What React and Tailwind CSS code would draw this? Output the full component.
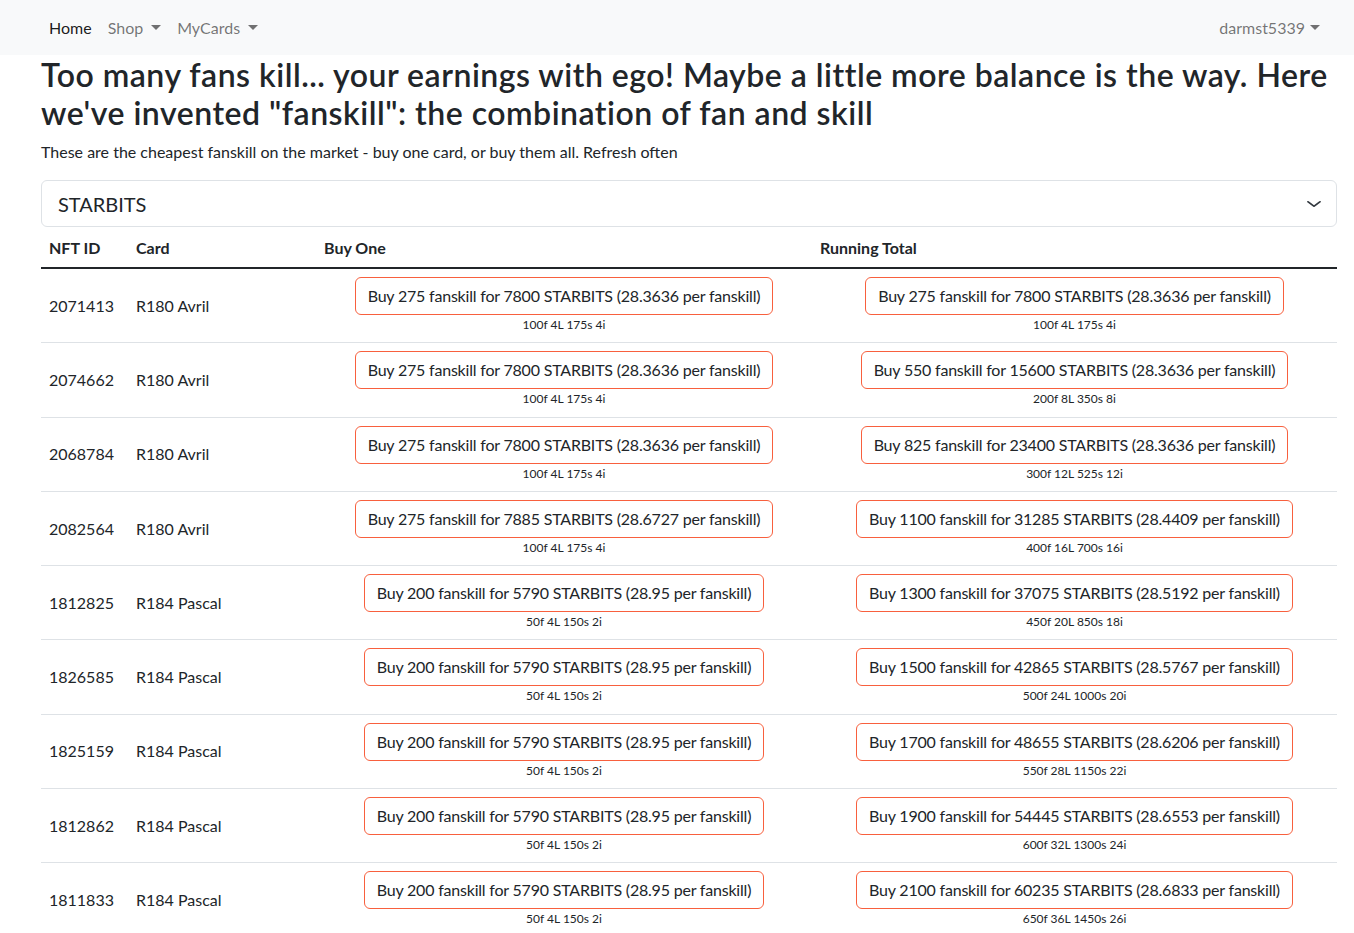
import React from 'react';

const rows = [
  { id: '2071413', card: 'R180 Avril', one: 'Buy 275 fanskill for 7800 STARBITS (28.3636 per fanskill)', oneSub: '100f 4L 175s 4i', total: 'Buy 275 fanskill for 7800 STARBITS (28.3636 per fanskill)', totalSub: '100f 4L 175s 4i' },
  { id: '2074662', card: 'R180 Avril', one: 'Buy 275 fanskill for 7800 STARBITS (28.3636 per fanskill)', oneSub: '100f 4L 175s 4i', total: 'Buy 550 fanskill for 15600 STARBITS (28.3636 per fanskill)', totalSub: '200f 8L 350s 8i' },
  { id: '2068784', card: 'R180 Avril', one: 'Buy 275 fanskill for 7800 STARBITS (28.3636 per fanskill)', oneSub: '100f 4L 175s 4i', total: 'Buy 825 fanskill for 23400 STARBITS (28.3636 per fanskill)', totalSub: '300f 12L 525s 12i' },
  { id: '2082564', card: 'R180 Avril', one: 'Buy 275 fanskill for 7885 STARBITS (28.6727 per fanskill)', oneSub: '100f 4L 175s 4i', total: 'Buy 1100 fanskill for 31285 STARBITS (28.4409 per fanskill)', totalSub: '400f 16L 700s 16i' },
  { id: '1812825', card: 'R184 Pascal', one: 'Buy 200 fanskill for 5790 STARBITS (28.95 per fanskill)', oneSub: '50f 4L 150s 2i', total: 'Buy 1300 fanskill for 37075 STARBITS (28.5192 per fanskill)', totalSub: '450f 20L 850s 18i' },
  { id: '1826585', card: 'R184 Pascal', one: 'Buy 200 fanskill for 5790 STARBITS (28.95 per fanskill)', oneSub: '50f 4L 150s 2i', total: 'Buy 1500 fanskill for 42865 STARBITS (28.5767 per fanskill)', totalSub: '500f 24L 1000s 20i' },
  { id: '1825159', card: 'R184 Pascal', one: 'Buy 200 fanskill for 5790 STARBITS (28.95 per fanskill)', oneSub: '50f 4L 150s 2i', total: 'Buy 1700 fanskill for 48655 STARBITS (28.6206 per fanskill)', totalSub: '550f 28L 1150s 22i' },
  { id: '1812862', card: 'R184 Pascal', one: 'Buy 200 fanskill for 5790 STARBITS (28.95 per fanskill)', oneSub: '50f 4L 150s 2i', total: 'Buy 1900 fanskill for 54445 STARBITS (28.6553 per fanskill)', totalSub: '600f 32L 1300s 24i' },
  { id: '1811833', card: 'R184 Pascal', one: 'Buy 200 fanskill for 5790 STARBITS (28.95 per fanskill)', oneSub: '50f 4L 150s 2i', total: 'Buy 2100 fanskill for 60235 STARBITS (28.6833 per fanskill)', totalSub: '650f 36L 1450s 26i' },
];

const Caret = ({ gap = 'ml-[8px]' }) => (
  <span className={`${gap} inline-block w-0 h-0 border-t-[5px] border-x-[5px] border-x-transparent border-t-current`} />
);

const BuyCell = ({ label, sub }) => (
  <td className="px-2 pt-2 pb-2 text-center align-middle">
    <button className="px-3 py-[6px] leading-6 text-[16px] tracking-[-0.2px] text-[#212529] border border-[#f8603e] rounded-[6px] bg-white">
      {label}
    </button>
    <div className="text-[12px] leading-[19.3px] text-[#212529]">{sub}</div>
  </td>
);

const App = () => {
  return (
    <div className="min-h-screen bg-white text-[#212529] text-[16px] leading-6" style={{ fontFamily: 'Lato, "Noto Sans", sans-serif' }}>
      <nav className="h-[55px] bg-[#f8f9fa] flex items-center justify-between pl-[41px] pr-[26px]">
        <div className="flex items-center">
          <a className="px-2 text-black/90">Home</a>
          <a className="px-2 text-black/55 flex items-center">Shop<Caret /></a>
          <a className="px-2 text-black/55 flex items-center">MyCards<Caret /></a>
        </div>
        <a className="px-2 text-black/55 flex items-center">darmst5339<Caret gap="ml-[5px]" /></a>
      </nav>

      <div className="pl-[41px] pr-[17px]">
        <h2 className="mt-[1px] text-[32px] leading-[38px] font-semibold tracking-[0.5px] mb-2">
          Too many fans kill... your earnings with ego! Maybe a little more balance is the way. Here we've invented "fanskill": the combination of fan and skill
        </h2>
        <p className="mb-4">These are the cheapest fanskill on the market - buy one card, or buy them all. Refresh often</p>

        <div className="h-[47px] border border-[#dee2e6] rounded-[6px] flex items-center justify-between pl-4 pr-[14px] text-[20px]">
          <span>STARBITS</span>
          <svg width="16" height="12" viewBox="0 0 16 16" preserveAspectRatio="none" fill="none" stroke="#343a40" strokeWidth="2" strokeLinecap="round" strokeLinejoin="round">
            <path d="M2 5l6 6 6-6" />
          </svg>
        </div>

        <table className="w-full border-collapse">
          <thead>
            <tr className="border-b-2 border-[#212529]">
              <th className="w-[87px] px-2 pt-[9px] pb-[7px] text-left font-bold">NFT ID</th>
              <th className="w-[188px] px-2 pt-[9px] pb-[7px] text-left font-bold">Card</th>
              <th className="w-[496px] px-2 pt-[9px] pb-[7px] text-left font-bold">Buy One</th>
              <th className="px-2 pt-[9px] pb-[7px] text-left font-bold">Running Total</th>
            </tr>
          </thead>
          <tbody>
            {rows.map((r) => (
              <tr key={r.id} className="border-b border-[#dee2e6]">
                <td className="px-2 align-middle">{r.id}</td>
                <td className="px-2 align-middle">{r.card}</td>
                <BuyCell label={r.one} sub={r.oneSub} />
                <BuyCell label={r.total} sub={r.totalSub} />
              </tr>
            ))}
          </tbody>
        </table>
      </div>
    </div>
  );
};

export default App;
